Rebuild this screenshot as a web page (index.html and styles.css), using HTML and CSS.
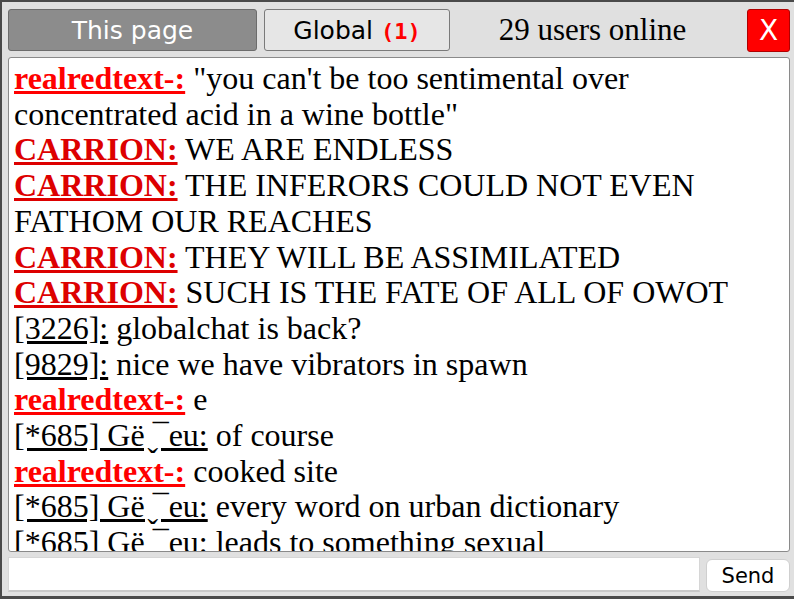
FILE: index.html
```html
<!DOCTYPE html>
<html lang="en">
<head>
    <meta charset="UTF-8">
    <title>Chat</title>
    <link rel="stylesheet" href="styles.css">
</head>
<body>

    <div class="chat-window">
        <div class="chat-top">
            <button class="tab tab-active">This page</button>
            <button class="tab">Global <b class="unread">(1)</b></button>
            <span class="online">29 users online</span>
            <button class="close-btn">X</button>
        </div>

        <div class="chat-log">
            <div><span class="nick red">realredtext-:</span> "you can't be too sentimental over concentrated acid in a wine bottle"</div>
            <div><span class="nick dark">CARRION:</span> WE ARE ENDLESS</div>
            <div><span class="nick dark">CARRION:</span> THE INFERORS COULD NOT EVEN FATHOM OUR REACHES</div>
            <div><span class="nick dark">CARRION:</span> THEY WILL BE ASSIMILATED</div>
            <div><span class="nick dark">CARRION:</span> SUCH IS THE FATE OF ALL OF OWOT</div>
            <div><span class="nick">[3226]:</span> globalchat is back?</div>
            <div><span class="nick">[9829]:</span> nice we have vibrators in spawn</div>
            <div><span class="nick red">realredtext-:</span> e</div>
            <div><span class="nick">[*685] Gë &#812;&#175;eu:</span> of course</div>
            <div><span class="nick red">realredtext-:</span> cooked site</div>
            <div><span class="nick">[*685] Gë &#812;&#175;eu:</span> every word on urban dictionary</div>
            <div><span class="nick">[*685] Gë &#812;&#175;eu:</span> leads to something sexual</div>
        </div>

        <div class="chat-bottom">
            <input class="chat-input" type="text">
            <button class="send-btn">Send</button>
        </div>
    </div>

</body>
</html>
```

FILE: styles.css
```css
body { margin: 0; background: #e0e0e0; }
.chat-window { width: 794px; height: 599px; box-sizing: border-box; border-left: 2px solid #4a4a4a; border-top: 2px solid #4a4a4a; border-bottom: 3px solid #4a4a4a; background: #e0e0e0; padding: 7px 4px 0 6px; display: flex; flex-direction: column; }
.chat-top { display: flex; align-items: center; height: 42px; }
.tab { font-family: "DejaVu Sans", sans-serif; font-size: 25px; height: 42px; border: 1px solid #7a7a7a; border-radius: 3px; background: #e6e6e6; color: #000; padding: 0; }
.tab-active { width: 249px; background: #8c8c8c; border-color: #6c6c6c; color: #fff; margin-right: 7px; }
.tab + .tab { width: 186px; }
.unread { color: #f00; font-family: "DejaVu Sans Mono", monospace; font-size: 22px; }
.online { flex: 1; text-align: center; font-family: "Liberation Serif", serif; font-size: 31px; padding-right: 12px; }
.close-btn { width: 43px; height: 43px; background: #f00; border: 1px solid #b00000; border-radius: 3px; color: #fff; font-family: "DejaVu Sans", sans-serif; font-size: 28px; padding: 0; }
.chat-log { margin-top: 6px; height: 495px; box-sizing: border-box; background: #fff; border: 1px solid #8a8a8a; border-radius: 3px; padding: 3px 5px; overflow: hidden; font-family: "Liberation Serif", serif; font-size: 32px; line-height: 35.7px; }
.nick { text-decoration: underline; }
.red { color: #f00; font-weight: bold; }
.dark { color: #d00; font-weight: bold; }
.chat-bottom { display: flex; gap: 6px; margin-top: 5px; }
.chat-input { flex: 1; height: 35px; box-sizing: border-box; border: 1px solid #d6d6d6; border-bottom: 2px solid #c8c8c8; background: #fff; }
.send-btn { width: 84px; height: 33px; margin-top: 2px; font-family: "DejaVu Sans", sans-serif; font-size: 21px; background: #fff; border: 1px solid #cfcfcf; border-radius: 6px; padding: 0; }
```
